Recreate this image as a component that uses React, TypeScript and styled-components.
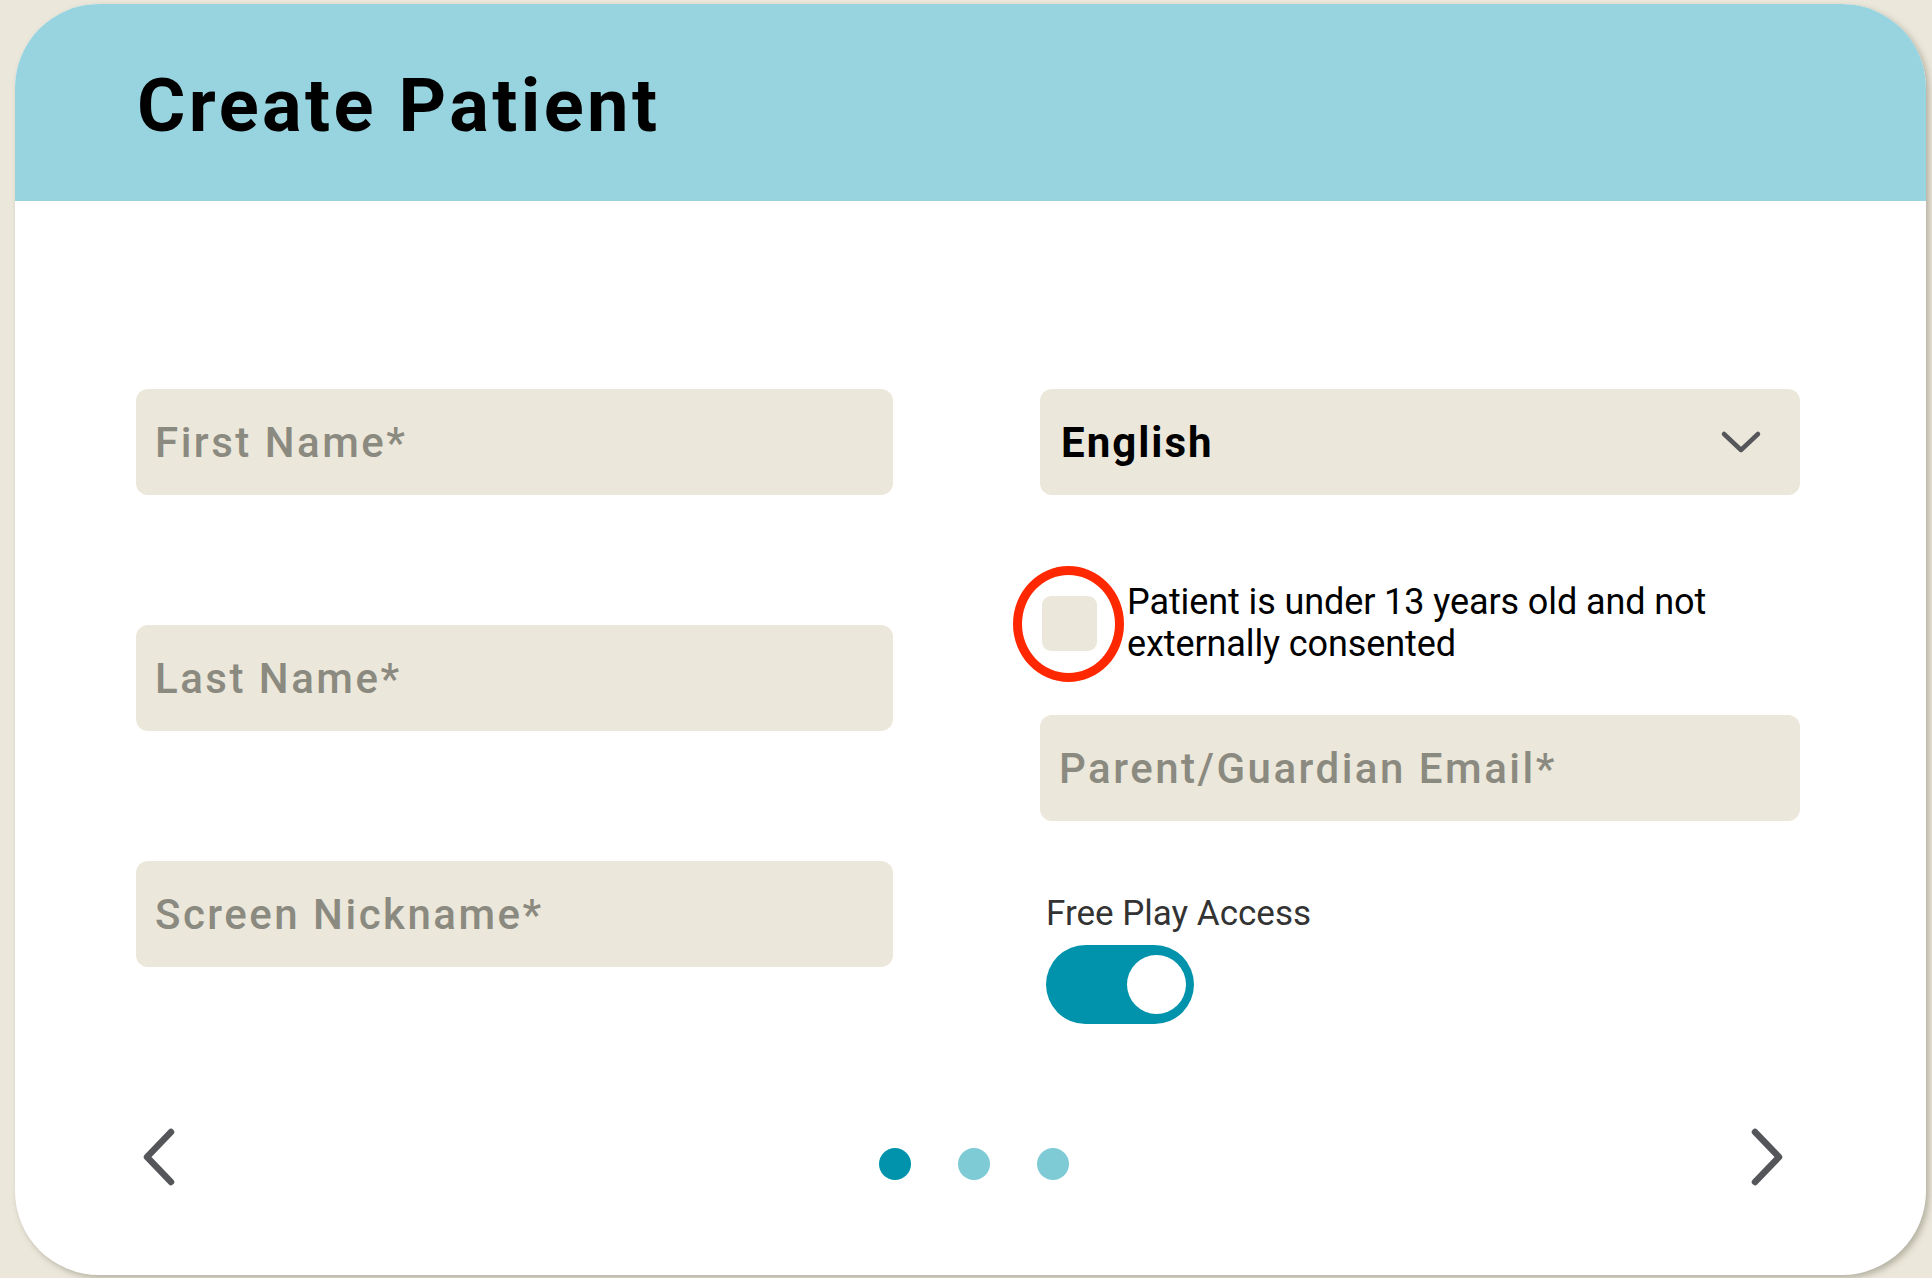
import styled, { createGlobalStyle } from "styled-components";

const GlobalStyle = createGlobalStyle`
  html, body {
    margin: 0;
    padding: 0;
    background: #ebe7da;
    font-family: Roboto, "Noto Sans", "Liberation Sans", sans-serif;
  }
`;

const ChevronDown = () => (
  <svg width="42" height="24" viewBox="0 0 42 24" fill="none">
    <path d="M4 4 L21 20 L38 4" stroke="#55565a" strokeWidth="4.5" strokeLinecap="round" strokeLinejoin="round" />
  </svg>
);

const ChevronSide = ({ dir }: { dir: "left" | "right" }) => (
  <svg width="38" height="60" viewBox="0 0 38 60" fill="none">
    <path
      d={dir === "left" ? "M31 5 L7 30 L31 55" : "M7 5 L31 30 L7 55"}
      stroke="#55565a"
      strokeWidth="6.5"
      strokeLinecap="round"
      strokeLinejoin="round"
    />
  </svg>
);

export default function App() {
  return (
    <Page>
      <GlobalStyle />
      <Card>
        <Header>
          <Title>Create Patient</Title>
        </Header>
        <Body>
          <Fields>
            <Column>
              <TextField placeholder="First Name*" />
              <TextField placeholder="Last Name*" />
              <TextField placeholder="Screen Nickname*" />
            </Column>
            <Column>
              <Select>
                <SelectValue>English</SelectValue>
                <ChevronDown />
              </Select>
              <ConsentRow>
                <CheckWrap>
                  <CheckBox />
                  <Highlight />
                </CheckWrap>
                <ConsentLabel>Patient is under 13 years old and not externally consented</ConsentLabel>
              </ConsentRow>
              <EmailField placeholder="Parent/Guardian Email*" />
              <ToggleLabel>Free Play Access</ToggleLabel>
              <Toggle $on>
                <Thumb />
              </Toggle>
            </Column>
          </Fields>
          <Nav>
            <NavButton $side="left">
              <ChevronSide dir="left" />
            </NavButton>
            <Dots>
              <Dot $active />
              <Dot />
              <Dot />
            </Dots>
            <NavButton $side="right">
              <ChevronSide dir="right" />
            </NavButton>
          </Nav>
        </Body>
      </Card>
    </Page>
  );
}

const Page = styled.div`
  padding: 4px 6px 3px 15px;
  width: 1932px;
  height: 1278px;
  box-sizing: border-box;
  background: #ebe7da;
`;

const Card = styled.div`
  width: 100%;
  height: 100%;
  background: #ffffff;
  border-radius: 84px;
  overflow: hidden;
  display: flex;
  flex-direction: column;
  box-shadow: 3px 3px 6px rgba(80, 76, 60, 0.35);
`;

const Header = styled.div`
  height: 197px;
  box-sizing: border-box;
  background: #98d4df;
  display: flex;
  align-items: center;
  padding: 6px 0 0 122px;
  flex-shrink: 0;
`;

const Title = styled.h1`
  margin: 0;
  font-size: 74px;
  font-weight: 700;
  letter-spacing: 3.4px;
  color: #000;
`;

const Body = styled.div`
  flex: 1;
  display: flex;
  flex-direction: column;
  padding: 188px 126px 88px 121px;
`;

const Fields = styled.div`
  display: grid;
  grid-template-columns: 757px 760px;
  column-gap: 147px;
`;

const Column = styled.div`
  display: flex;
  flex-direction: column;
  gap: 130px;

  & + & {
    gap: 0;
  }
`;

const TextField = styled.input`
  height: 106px;
  box-sizing: border-box;
  border: none;
  border-radius: 12px;
  background: #ebe7da;
  padding: 0 19px;
  font-family: Roboto, sans-serif;
  font-size: 42px;
  font-weight: 500;
  letter-spacing: 2.5px;
  color: #222;
  outline: none;

  &::placeholder {
    color: #8b8a80;
  }
`;

const EmailField = styled(TextField)`
  margin-top: 50px;
`;

const Select = styled.div`
  height: 106px;
  box-sizing: border-box;
  border-radius: 12px;
  background: #ebe7da;
  padding: 0 38px 0 21px;
  display: flex;
  align-items: center;
  justify-content: space-between;
`;

const SelectValue = styled.span`
  font-size: 42px;
  font-weight: 700;
  letter-spacing: 2px;
  color: #000;
`;

const ConsentRow = styled.div`
  margin-top: 86px;
  display: flex;
  align-items: center;
  gap: 30px;
`;

const CheckWrap = styled.div`
  position: relative;
  width: 55px;
  height: 55px;
  flex-shrink: 0;
  margin-left: 2px;
`;

const CheckBox = styled.div`
  width: 55px;
  height: 55px;
  border-radius: 9px;
  background: #ebe7da;
`;

const Highlight = styled.div`
  position: absolute;
  left: -29px;
  top: -30px;
  width: 111px;
  height: 116px;
  box-sizing: border-box;
  border: 9px solid #ff2800;
  border-radius: 50%;
`;

const ConsentLabel = styled.span`
  font-size: 36px;
  line-height: 42px;
  letter-spacing: -0.1px;
  color: #000;
`;

const ToggleLabel = styled.span`
  margin-top: 72px;
  margin-left: 6px;
  font-size: 35px;
  line-height: 41px;
  color: #333;
`;

const Toggle = styled.div<{ $on?: boolean }>`
  margin-top: 11px;
  margin-left: 6px;
  width: 148px;
  height: 79px;
  border-radius: 40px;
  background: ${(p) => (p.$on ? "#0093ab" : "#c9c9c9")};
  display: flex;
  align-items: center;
  justify-content: ${(p) => (p.$on ? "flex-end" : "flex-start")};
  padding: 0 8px;
  box-sizing: border-box;
`;

const Thumb = styled.div`
  width: 59px;
  height: 59px;
  border-radius: 50%;
  background: #ffffff;
`;

const Nav = styled.div`
  margin-top: auto;
  display: grid;
  grid-template-columns: 1fr auto 1fr;
  align-items: center;
  height: 60px;
`;

const NavButton = styled.div<{ $side: "left" | "right" }>`
  display: flex;
  justify-content: ${(p) => (p.$side === "left" ? "flex-start" : "flex-end")};
  padding-left: ${(p) => (p.$side === "left" ? "4px" : "0")};
  padding-right: ${(p) => (p.$side === "right" ? "14px" : "0")};
`;

const Dots = styled.div`
  display: flex;
  gap: 47px;
  padding-top: 13px;
  margin-left: 11px;
`;

const Dot = styled.span<{ $active?: boolean }>`
  width: 32px;
  height: 32px;
  border-radius: 50%;
  background: ${(p) => (p.$active ? "#0093ab" : "#7ecbd6")};
`;
